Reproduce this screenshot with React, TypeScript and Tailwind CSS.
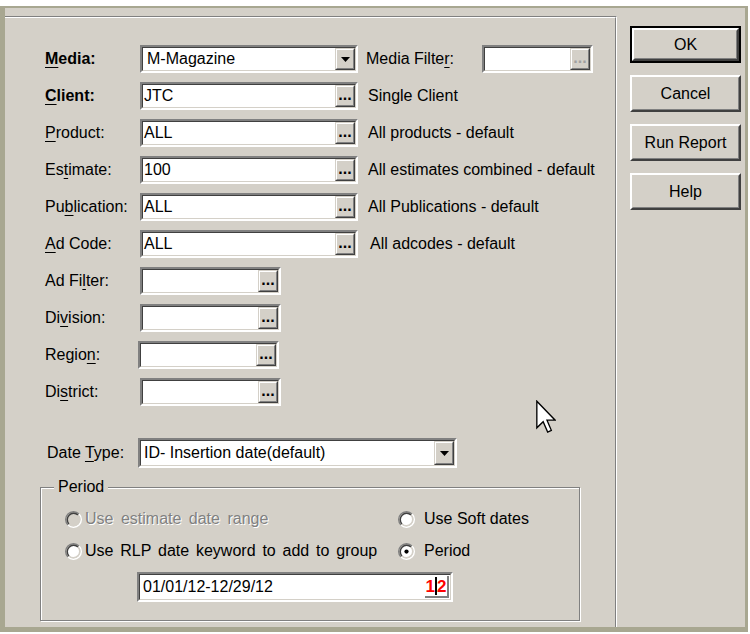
import React from 'react';

const FONT = "font-['Liberation_Sans',Arial,sans-serif]";

function Key({ text, k, bold }: { text: string; k: number; bold?: boolean }) {
  return (
    <span className={bold ? 'font-bold' : ''}>
      {text.slice(0, k)}
      <span className="underline underline-offset-[3px]">{text[k]}</span>
      {text.slice(k + 1)}
    </span>
  );
}

function Sunken({ className, children }: { className: string; children?: React.ReactNode }) {
  return (
    <div className={`border-2 border-t-[#808080] border-l-[#808080] border-b-white border-r-white ${className}`}>
      <div className="h-full w-full border border-t-[#404040] border-l-[#404040] border-b-[#d4d0c8] border-r-[#d4d0c8] bg-white flex items-stretch">
        {children}
      </div>
    </div>
  );
}

function Raised({ className, children }: { className: string; children?: React.ReactNode }) {
  return (
    <div className={`bg-[#d4d0c8] border border-t-[#d4d0c8] border-l-[#d4d0c8] border-b-[#404040] border-r-[#404040] ${className}`}>
      <div className="h-full w-full border border-t-white border-l-white border-b-[#808080] border-r-[#808080] flex items-center justify-center">
        {children}
      </div>
    </div>
  );
}

function Dots({ disabled }: { disabled?: boolean }) {
  return (
    <Raised className="w-[20px] shrink-0">
      <span
        className={`self-end pb-[2px] text-[16px] font-bold leading-none ${
          disabled ? 'text-[#a0a0a0]' : 'text-black'
        }`}
      >
        ...
      </span>
    </Raised>
  );
}

function Arrow() {
  return (
    <Raised className="w-[20px] shrink-0">
      <svg width="9" height="5" viewBox="0 0 9 5">
        <polygon points="0,0 9,0 4.5,5" fill="#000" />
      </svg>
    </Raised>
  );
}

function Browse({ value, w }: { value?: string; w: string }) {
  return (
    <Sunken className={`h-[28px] ${w}`}>
      <span className="flex-1 pl-[1px] flex items-center">{value}</span>
      <Dots />
    </Sunken>
  );
}

function Row({ label, children }: { label: React.ReactNode; children: React.ReactNode }) {
  return (
    <div className="flex items-center h-[28px] mb-[9px]">
      <div className="w-[95px] shrink-0">{label}</div>
      {children}
    </div>
  );
}

function Radio({ checked, disabled }: { checked?: boolean; disabled?: boolean }) {
  return (
    <svg width="17" height="17" viewBox="0 0 12 12" className="shrink-0">
      <circle cx="6" cy="6" r="4.2" fill={disabled ? '#d4d0c8' : '#fff'} />
      <path d="M2.11 9.89 A5.5 5.5 0 0 1 9.89 2.11" stroke="#808080" strokeWidth="1" fill="none" />
      <path d="M9.89 2.11 A5.5 5.5 0 0 1 2.11 9.89" stroke="#fff" strokeWidth="1" fill="none" />
      <path d="M2.82 9.18 A4.5 4.5 0 0 1 9.18 2.82" stroke="#404040" strokeWidth="1" fill="none" />
      <path d="M9.18 2.82 A4.5 4.5 0 0 1 2.82 9.18" stroke="#d4d0c8" strokeWidth="1" fill="none" />
      {checked && <circle cx="6" cy="6" r="1.5" fill="#000" />}
    </svg>
  );
}

function Button({ label, def }: { label: string; def?: boolean }) {
  return (
    <div className={`w-[111px] h-[37px] ${def ? 'border-2 border-black' : ''}`}>
      <div className="h-full border-2 border-t-white border-l-white border-b-[#404040] border-r-[#404040] bg-[#d4d0c8]">
        <div className="h-full border border-t-[#d4d0c8] border-l-[#d4d0c8] border-b-[#808080] border-r-[#808080] flex items-center justify-center">
          {label}
        </div>
      </div>
    </div>
  );
}

export default function App() {
  return (
    <div className={`relative w-[750px] h-[634px] bg-white overflow-hidden text-[16px] text-black ${FONT}`}>
      <div className="mt-[6px] h-[626px] w-[748px] bg-[#a8a791] pt-[2px] pl-[5px] pr-[3px] pb-[5px]">
        <div className="flex h-full bg-[#d4d0c8]">
          {/* left panel */}
          <div className="mt-[8px] w-[612px] border-t border-r border-t-[#808080] border-r-white">
            <div className="h-full border-t border-r border-t-white border-r-[#808080] pt-[27px] pl-[40px]">
              <Row label={<Key text="Media:" k={0} bold />}>
                <Sunken className="h-[28px] w-[218px]">
                  <span className="flex-1 pl-[4px] flex items-center">M-Magazine</span>
                  <Arrow />
                </Sunken>
                <span className="ml-[8px] w-[116px]">
                  <Key text="Media Filter:" k={11} />
                </span>
                <Sunken className="h-[28px] w-[111px]">
                  <span className="flex-1" />
                  <Dots disabled />
                </Sunken>
              </Row>
              <Row label={<Key text="Client:" k={0} bold />}>
                <Browse value="JTC" w="w-[218px]" />
                <span className="ml-[10px]">Single Client</span>
              </Row>
              <Row label={<Key text="Product:" k={0} />}>
                <Browse value="ALL" w="w-[218px]" />
                <span className="ml-[10px]">All products - default</span>
              </Row>
              <Row label={<Key text="Estimate:" k={2} />}>
                <Browse value="100" w="w-[218px]" />
                <span className="ml-[10px]">All estimates combined - default</span>
              </Row>
              <Row label={<Key text="Publication:" k={2} />}>
                <Browse value="ALL" w="w-[218px]" />
                <span className="ml-[10px]">All Publications - default</span>
              </Row>
              <Row label={<Key text="Ad Code:" k={0} />}>
                <Browse value="ALL" w="w-[218px]" />
                <span className="ml-[12px]">All adcodes - default</span>
              </Row>
              <Row label={<Key text="Ad Filter:" k={5} />}>
                <Browse w="w-[141px]" />
              </Row>
              <Row label={<Key text="Division:" k={2} />}>
                <Browse w="w-[141px]" />
              </Row>
              <Row label={<Key text="Region:" k={5} />}>
                <div className="-ml-[2px]">
                  <Browse w="w-[141px]" />
                </div>
              </Row>
              <Row label={<Key text="District:" k={2} />}>
                <Browse w="w-[141px]" />
              </Row>

              <div className="mt-[32px] flex items-center h-[30px]">
                <div className="w-[93px] pl-[2px] shrink-0">
                  <Key text="Date Type:" k={5} />
                </div>
                <Sunken className="h-[30px] w-[319px]">
                  <span className="flex-1 pl-[3px] flex items-center">ID- Insertion date(default)</span>
                  <Arrow />
                </Sunken>
              </div>

              {/* Period group */}
              <div className="relative mt-[19px] -ml-[5px] w-[540px] border border-[#808080] shadow-[1px_1px_0_#fff,inset_1px_1px_0_#fff] pt-[21px] pb-[18px] pl-[24px]">
                <span className="absolute left-[13px] -top-[11px] px-[4px] bg-[#d4d0c8] leading-[20px]">Period</span>
                <div className="flex items-center h-[20px]">
                  <div className="w-[333px] flex items-center gap-[3px]">
                    <Radio disabled />
                    <span className="text-[#808080] [text-shadow:1px_1px_0_#fff] [word-spacing:3px]">Use estimate date range</span>
                  </div>
                  <div className="flex items-center gap-[9px]">
                    <Radio />
                    <span>Use Soft dates</span>
                  </div>
                </div>
                <div className="flex items-center h-[20px] mt-[12px]">
                  <div className="w-[333px] flex items-center gap-[3px]">
                    <Radio />
                    <span className="[word-spacing:2.4px]">Use RLP date keyword to add to group</span>
                  </div>
                  <div className="flex items-center gap-[9px]">
                    <Radio checked />
                    <span>Period</span>
                  </div>
                </div>
                <div className="mt-[11px] ml-[72px]">
                  <Sunken className="h-[30px] w-[316px]">
                    <span className="flex-1 pl-[3px] flex items-center">01/01/12-12/29/12</span>
                    <div className="w-[24px] my-[1px] mr-[1px] bg-white border-r-2 border-b-2 border-[#808080] flex items-center justify-center font-bold text-[17px] leading-none text-[#ff0000]">
                      <span>1</span>
                      <span className="w-[2px] h-[18px] bg-black" />
                      <span>2</span>
                    </div>
                  </Sunken>
                </div>
              </div>
            </div>
          </div>

          {/* right panel */}
          <div className="flex-1 pl-[13px] pt-[18px] flex flex-col gap-[12px]">
            <Button label="OK" def />
            <Button label="Cancel" />
            <Button label="Run Report" />
            <Button label="Help" />
          </div>
        </div>
      </div>

      {/* mouse pointer */}
      <svg className="absolute left-[536px] top-[400px]" width="20" height="34" viewBox="0 0 12 20">
        <path d="M0.5 0.5 L0.5 16.5 L4.3 12.8 L7 19 L9.2 18 L6.6 11.9 L11.5 11.9 Z" fill="#fff" stroke="#000" strokeWidth="0.8" strokeLinejoin="miter" />
      </svg>
    </div>
  );
}
